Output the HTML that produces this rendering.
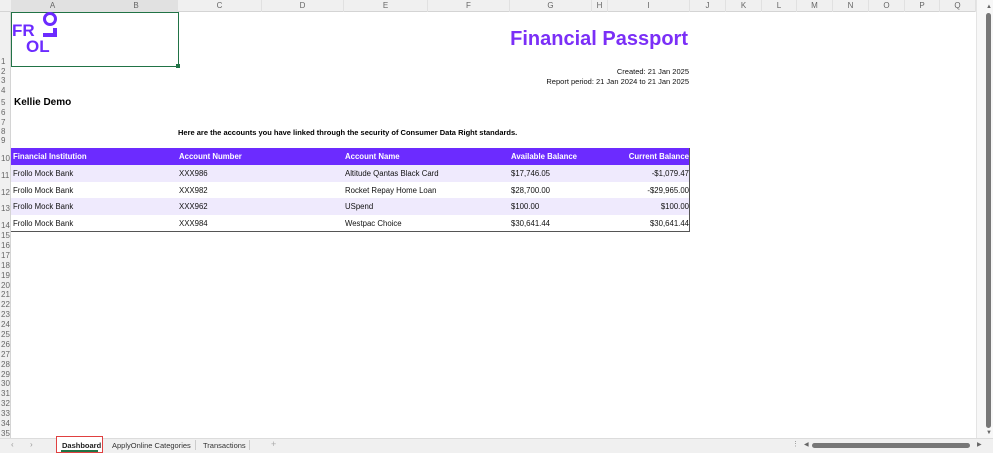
<!DOCTYPE html>
<html><head><meta charset="utf-8"><style>
*{margin:0;padding:0;box-sizing:border-box}
body{width:993px;height:453px;overflow:hidden;background:#fff;font-family:"Liberation Sans",Arial,sans-serif;position:relative}
.a{position:absolute;white-space:nowrap}
.ch{position:absolute;top:0;height:12px;font-size:8px;color:#666;text-align:center;line-height:12px;border-right:1px solid #e1e1e1}
.rh{position:absolute;left:0;width:11px;font-size:8px;color:#666;text-align:left;padding-left:1px;line-height:10px}
.tr{position:absolute;left:11px;width:679px;height:17px;font-size:7.8px;color:#111;line-height:17px}
.tr span{position:absolute}
.hd{background:#6c2bff;color:#fff;font-weight:bold}
.lg{position:absolute;font-size:17px;font-weight:bold;color:#6c2bff;line-height:17px}
</style></head><body>
<div class="a" style="left:0;top:0;width:976px;height:12px;background:#f0f0f0;border-bottom:1px solid #d4d4d4"></div>
<div class="a" style="left:0;top:12px;width:11px;height:426px;background:#f0f0f0;border-right:1px solid #d4d4d4"></div>
<div class="ch" style="left:11px;width:84px;background:#e1e1e1">A</div>
<div class="ch" style="left:95px;width:83px;background:#e1e1e1">B</div>
<div class="ch" style="left:178px;width:84px">C</div>
<div class="ch" style="left:262px;width:82px">D</div>
<div class="ch" style="left:344px;width:84px">E</div>
<div class="ch" style="left:428px;width:82px">F</div>
<div class="ch" style="left:510px;width:82px">G</div>
<div class="ch" style="left:592px;width:16px">H</div>
<div class="ch" style="left:608px;width:82px">I</div>
<div class="ch" style="left:690px;width:36px">J</div>
<div class="ch" style="left:726px;width:36px">K</div>
<div class="ch" style="left:762px;width:35px">L</div>
<div class="ch" style="left:797px;width:36px">M</div>
<div class="ch" style="left:833px;width:36px">N</div>
<div class="ch" style="left:869px;width:36px">O</div>
<div class="ch" style="left:905px;width:35px">P</div>
<div class="ch" style="left:940px;width:36px">Q</div>
<div class="rh" style="top:57px">1</div><div class="rh" style="top:67px">2</div><div class="rh" style="top:76px">3</div><div class="rh" style="top:86px">4</div><div class="rh" style="top:98px">5</div><div class="rh" style="top:108px">6</div><div class="rh" style="top:118px">7</div><div class="rh" style="top:127px">8</div><div class="rh" style="top:136px">9</div><div class="rh" style="top:154px">10</div><div class="rh" style="top:171px">11</div><div class="rh" style="top:188px">12</div><div class="rh" style="top:204px">13</div><div class="rh" style="top:221px">14</div>
<div class="rh" style="top:231px">15</div><div class="rh" style="top:241px">16</div><div class="rh" style="top:251px">17</div><div class="rh" style="top:261px">18</div><div class="rh" style="top:271px">19</div><div class="rh" style="top:281px">20</div><div class="rh" style="top:290px">21</div><div class="rh" style="top:300px">22</div><div class="rh" style="top:310px">23</div><div class="rh" style="top:320px">24</div><div class="rh" style="top:330px">25</div><div class="rh" style="top:340px">26</div><div class="rh" style="top:350px">27</div><div class="rh" style="top:360px">28</div><div class="rh" style="top:370px">29</div><div class="rh" style="top:379px">30</div><div class="rh" style="top:389px">31</div><div class="rh" style="top:399px">32</div><div class="rh" style="top:409px">33</div><div class="rh" style="top:419px">34</div><div class="rh" style="top:429px">35</div>
<div class="a" style="left:11px;top:12px;width:168px;height:55px;border:1px solid #217346"></div>
<div class="a" style="left:176px;top:64px;width:4px;height:4px;background:#217346"></div>
<!-- logo -->
<div class="lg" style="left:12px;top:22px">FR</div>
<div class="lg" style="left:26px;top:38px">OL</div>
<div class="a" style="left:43px;top:12px;width:14px;height:14px;border:3.5px solid #6c2bff;border-radius:50%"></div>
<div class="a" style="left:53px;top:28px;width:4px;height:9px;background:#6c2bff"></div>
<div class="a" style="left:43px;top:33px;width:14px;height:4px;background:#6c2bff"></div>
<!-- title -->
<div class="a" style="right:305px;top:28px;font-size:20px;font-weight:bold;color:#7b2ff7">Financial Passport</div>
<div class="a" style="right:304px;top:67px;font-size:7.5px;color:#111">Created: 21 Jan 2025</div>
<div class="a" style="right:304px;top:77px;font-size:7.5px;color:#111">Report period: 21 Jan 2024 to 21 Jan 2025</div>
<div class="a" style="left:14px;top:97px;font-size:10px;font-weight:bold;color:#000">Kellie Demo</div>
<div class="a" style="left:178px;top:128px;font-size:7.5px;font-weight:bold;color:#000">Here are the accounts you have linked through the security of Consumer Data Right standards.</div>
<div class="tr hd" style="top:148px"><span style="left:2px">Financial Institution</span><span style="left:168px">Account Number</span><span style="left:334px">Account Name</span><span style="left:500px">Available Balance</span><span style="right:1px">Current Balance</span></div>
<div class="tr" style="top:165px;background:#efeafd"><span style="left:2px">Frollo Mock Bank</span><span style="left:168px">XXX986</span><span style="left:334px">Altitude Qantas Black Card</span><span style="left:500px">$17,746.05</span><span style="right:1px">-$1,079.47</span></div>
<div class="tr" style="top:182px"><span style="left:2px">Frollo Mock Bank</span><span style="left:168px">XXX982</span><span style="left:334px">Rocket Repay Home Loan</span><span style="left:500px">$28,700.00</span><span style="right:1px">-$29,965.00</span></div>
<div class="tr" style="top:198px;background:#efeafd"><span style="left:2px">Frollo Mock Bank</span><span style="left:168px">XXX962</span><span style="left:334px">USpend</span><span style="left:500px">$100.00</span><span style="right:1px">$100.00</span></div>
<div class="tr" style="top:215px"><span style="left:2px">Frollo Mock Bank</span><span style="left:168px">XXX984</span><span style="left:334px">Westpac Choice</span><span style="left:500px">$30,641.44</span><span style="right:1px">$30,641.44</span></div>
<div class="a" style="left:689px;top:148px;width:1px;height:84px;background:#555"></div>
<div class="a" style="left:11px;top:231px;width:679px;height:1px;background:#555"></div>
<div class="a" style="left:976px;top:0;width:17px;height:438px;background:#f7f7f7;border-left:1px solid #e4e4e4"></div>
<div class="a" style="left:986px;top:4px;font-size:6px;color:#666">▲</div>
<div class="a" style="left:986px;top:430px;font-size:6px;color:#666">▼</div>
<div class="a" style="left:986px;top:13px;width:5px;height:415px;background:#777;border-radius:3px"></div>
<div class="a" style="left:0;top:438px;width:993px;height:15px;background:#f0f0f0;border-top:1px solid #dcdcdc"></div>
<div class="a" style="left:11px;top:440px;font-size:8px;color:#999">‹</div>
<div class="a" style="left:30px;top:440px;font-size:8px;color:#999">›</div>
<div class="a" style="left:56px;top:436px;width:47px;height:17px;border:1.5px solid #e04040;background:#fff"></div>
<div class="a" style="left:62px;top:441px;font-size:7.5px;font-weight:bold;color:#222">Dashboard</div>
<div class="a" style="left:61px;top:450px;width:37px;height:1.5px;background:#217346"></div>
<div class="a" style="left:112px;top:441px;font-size:7.5px;color:#333">ApplyOnline Categories</div>
<div class="a" style="left:195px;top:440px;width:1px;height:10px;background:#ccc"></div>
<div class="a" style="left:203px;top:441px;font-size:7.5px;color:#333">Transactions</div>
<div class="a" style="left:249px;top:440px;width:1px;height:10px;background:#ccc"></div>
<div class="a" style="left:271px;top:439px;font-size:9px;color:#aaa">+</div>
<div class="a" style="left:792px;top:440px;font-size:7px;color:#888">⋮</div>
<div class="a" style="left:804px;top:441px;font-size:6px;color:#666">◀</div>
<div class="a" style="left:812px;top:443px;width:158px;height:5px;background:#777;border-radius:3px"></div>
<div class="a" style="left:977px;top:441px;font-size:6px;color:#666">▶</div>
</body></html>
